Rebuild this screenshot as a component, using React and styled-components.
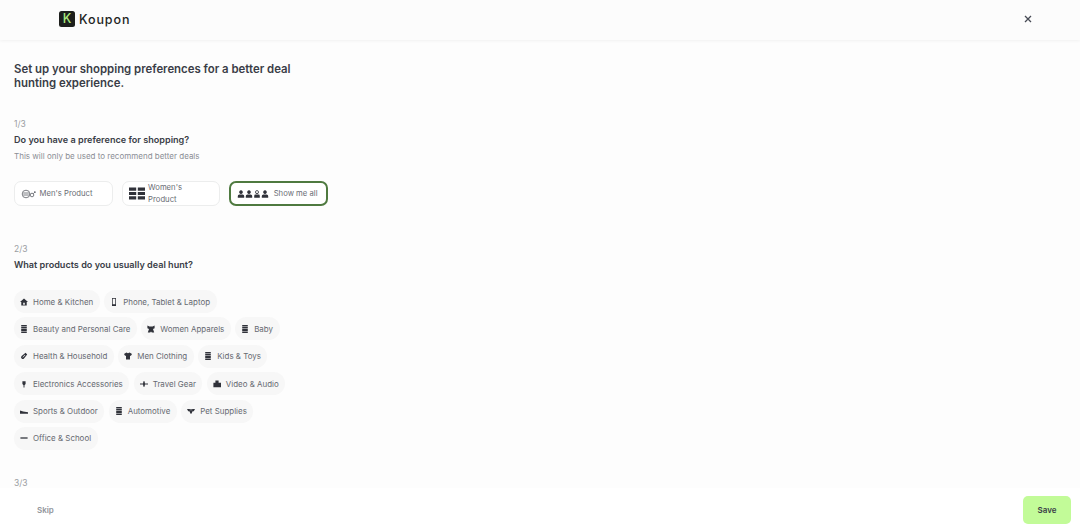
import React from "react";
import styled, { createGlobalStyle } from "styled-components";

const GlobalStyle = createGlobalStyle`
  html, body {
    margin: 0;
    padding: 0;
    height: 100%;
    background: #fff;
    font-family: Inter, "Noto Sans", sans-serif;
  }
  * { box-sizing: border-box; }
`;

const Page = styled.div`
  width: 1080px;
  height: 529px;
  display: flex;
  flex-direction: column;
  overflow: hidden;
  background: #fff;
`;

const Header = styled.header`
  flex: 0 0 40px;
  display: flex;
  align-items: center;
  justify-content: space-between;
  padding: 0 47px 2px 59px;
  background: #fcfcfc;
  box-shadow: 0 1px 3px rgba(0, 0, 0, 0.05);
  position: relative;
  z-index: 1;
`;

const Logo = styled.div`
  display: flex;
  align-items: center;
  gap: 4px;
`;

const LogoMark = styled.span`
  width: 16px;
  height: 16px;
  border-radius: 2.5px;
  background: #1d1f1c;
  color: #a9ea7c;
  font-size: 12.5px;
  font-weight: 500;
  line-height: 16px;
  text-align: center;
`;

const LogoText = styled.span`
  font-size: 12.5px;
  font-weight: 500;
  letter-spacing: 0.9px;
  color: #23251f;
`;

const CloseButton = styled.button`
  width: 10px;
  height: 10px;
  padding: 0;
  border: 0;
  background: none;
  display: flex;
  color: #474b55;
`;

const Main = styled.main`
  flex: 1;
  min-height: 0;
  overflow: hidden;
  padding: 23px 14px 0;
  background: #fdfdfd;
`;

const Title = styled.h1`
  width: 300px;
  margin: 0 0 29px;
  font-size: 11.4px;
  line-height: 13.5px;
  font-weight: 600;
  color: #3a3d47;
`;

const Section = styled.section`
  margin-bottom: ${(p) => p.$gap}px;
`;

const Step = styled.div`
  font-size: 8.5px;
  line-height: 10px;
  color: #9b9da3;
  margin-bottom: 5px;
`;

const Question = styled.h2`
  margin: 0;
  font-size: 9.1px;
  line-height: 12px;
  font-weight: 600;
  color: #3a3d47;
`;

const Hint = styled.p`
  margin: 5px 0 0;
  font-size: 8px;
  line-height: 10px;
  color: #8b8e95;
`;

const Options = styled.div`
  display: flex;
  gap: 8.8px;
  margin-top: 20px;
`;

const Option = styled.button`
  width: 98.8px;
  height: 25px;
  display: flex;
  align-items: center;
  gap: 3.5px;
  padding: 1px 6px 0;
  background: #fff;
  border-radius: 7px;
  border: ${(p) => (p.$selected ? "2px solid #4f7a40" : "1px solid #eceded")};
  font-family: inherit;
  font-size: 7.7px;
  line-height: 12px;
  color: #6a6d75;
  text-align: left;
`;

const IconGroup = styled.span`
  display: inline-flex;
  align-items: center;
  margin-right: 1px;
`;

const NoWrap = styled.span`
  white-space: nowrap;
`;

const Wrapped = styled.span`
  width: 40px;
`;

const Chips = styled.div`
  width: 290px;
  display: flex;
  flex-wrap: wrap;
  gap: 4.4px;
  margin-top: 19px;
`;

const Chip = styled.span`
  height: 23px;
  display: inline-flex;
  align-items: center;
  gap: 5px;
  padding: 0 6.5px 0 6px;
  border-radius: 12px;
  background: #f7f7f7;
  font-size: 7.95px;
  color: #666971;
  white-space: nowrap;
`;

const IconBox = styled.svg`
  flex: none;
  width: ${(p) => p.$size || 8}px;
  height: ${(p) => p.$size || 8}px;
  fill: #30323a;
`;

const Footer = styled.footer`
  flex: 0 0 41px;
  display: flex;
  align-items: center;
  justify-content: space-between;
  padding: 3px 9px 0 37px;
  background: #fff;
`;

const SkipButton = styled.button`
  padding: 0;
  border: 0;
  background: none;
  font-family: inherit;
  font-size: 8px;
  font-weight: 600;
  color: #93969c;
`;

const SaveButton = styled.button`
  width: 48px;
  height: 28px;
  border: 0;
  border-radius: 5px;
  background: #c2fb98;
  font-family: inherit;
  font-size: 8px;
  font-weight: 600;
  color: #3a3d47;
`;

const iconPaths = {
  home: "M5 0.5 L0 5 H1.6 V9.5 H8.4 V5 H10 Z M4 6 H6 V8.5 H4 Z",
  phone: "M2.5 0 H7.5 V10 H2.5 Z M3.4 1 V7.8 H6.6 V1 Z",
  stack: "M1.5 -1 H8.5 V1.4 H1.5 Z M1.5 2 H8.5 V4.4 H1.5 Z M1.5 5 H8.5 V7.4 H1.5 Z M1.5 8 H8.5 V11 H1.5 Z",
  bra: "M0.5 0.5 L3 2 H7 L9.5 0.5 V4 L7.5 5 L9 9.5 H6 L5 8 L4 9.5 H1 L2.5 5 L0.5 4 Z",
  bottle: "M7 1 L9 3 L5 8 Q3.5 9.5 2 8 Q0.5 6.5 2 5 Z M6 3.5 L3 6.5 L3.6 7 L6.6 4 Z",
  shirt: "M3 0.5 L5 1.5 L7 0.5 L10 2.5 L8.5 5 L7.5 4.5 V9.5 H2.5 V4.5 L1.5 5 L0 2.5 Z",
  plug: "M3 1.5 H7 V5 L5.6 6.5 V9.5 H4.4 V6.5 L3 5 Z",
  plane: "M0 4.3 H3.8 L4.3 1.5 H5.7 L6.2 4.3 H10 V5.7 H6.2 L5.7 8.5 H4.3 L3.8 5.7 H0 Z",
  video: "M3 0.5 H7 V3.3 H10 V9 H0.5 V3.3 H3 Z",
  shoe: "M0 4.5 L4 5.5 L10 6.5 V8.5 H0 Z",
  pet: "M0 2.5 H10 L8.5 5.2 H7 L5.5 8.5 H4.5 L3 5.2 H1.5 Z M3.5 3.2 V4.2 H4.5 V3.2 Z M5.5 3.2 V4.2 H6.5 V3.2 Z",
  dash: "M0.5 4.2 H9.5 V5.8 H0.5 Z",
  person: "M5 0.3 A2.3 2.3 0 1 1 4.99 0.3 Z M1 9.7 V7.5 Q1 5.5 3 5.5 H7 Q9 5.5 9 7.5 V9.7 Z",
  hollowPerson: "M5 0.3 A2.3 2.3 0 1 1 4.99 0.3 Z M5 1.3 A1.3 1.3 0 1 0 5.01 1.3 Z M1.5 9.7 V7.5 Q1.5 5.7 3 5.7 H7 Q8.5 5.7 8.5 7.5 V9.7 Z",
  book: "M0 1 H4.5 V3 H0 Z M5.5 1 H10 V3 H5.5 Z M0 3.7 H4.5 V5.7 H0 Z M5.5 3.7 H10 V5.7 H5.5 Z M0 6.4 H4.5 V8.4 H0 Z M5.5 6.4 H10 V8.4 H5.5 Z",
};

const Icon = ({ name, size }) => (
  <IconBox viewBox="0 0 10 10" $size={size}>
    <path d={iconPaths[name]} fillRule="evenodd" />
  </IconBox>
);

const GenderIcon = () => (
  <svg width="15" height="10" viewBox="0 0 15 10" fill="none" stroke="#5a5d64" strokeWidth="0.8" style={{ flex: "none" }}>
    <circle cx="5" cy="5" r="3.8" />
    <path d="M2.2 4 H7.8 M2.2 6 H7.8" />
    <circle cx="11" cy="6" r="1.8" />
    <path d="M12.3 4.7 L14.2 2.8 M13 2.8 H14.2 V4" />
  </svg>
);

const categories = [
  ["Home & Kitchen", "home"],
  ["Phone, Tablet & Laptop", "phone"],
  ["Beauty and Personal Care", "stack"],
  ["Women Apparels", "bra"],
  ["Baby", "stack"],
  ["Health & Household", "bottle"],
  ["Men Clothing", "shirt"],
  ["Kids & Toys", "stack"],
  ["Electronics Accessories", "plug"],
  ["Travel Gear", "plane"],
  ["Video & Audio", "video"],
  ["Sports & Outdoor", "shoe"],
  ["Automotive", "stack"],
  ["Pet Supplies", "pet"],
  ["Office & School", "dash"],
];

const App = () => (
  <Page>
    <GlobalStyle />
    <Header>
      <Logo>
        <LogoMark>K</LogoMark>
        <LogoText>Koupon</LogoText>
      </Logo>
      <CloseButton aria-label="Close">
        <svg width="10" height="10" viewBox="0 0 10 10" fill="none" stroke="currentColor" strokeWidth="1.3">
          <path d="M2 2 L8 8 M8 2 L2 8" />
        </svg>
      </CloseButton>
    </Header>
    <Main>
      <Title>Set up your shopping preferences for a better deal hunting experience.</Title>
      <Section $gap={38}>
        <Step>1/3</Step>
        <Question>Do you have a preference for shopping?</Question>
        <Hint>This will only be used to recommend better deals</Hint>
        <Options>
          <Option>
            <GenderIcon />
            <NoWrap>Men's Product</NoWrap>
          </Option>
          <Option>
            <Icon name="book" size={16} />
            <Wrapped>Women's Product</Wrapped>
          </Option>
          <Option $selected>
            <IconGroup>
              <Icon name="person" size={8} />
              <Icon name="person" size={8} />
              <Icon name="hollowPerson" size={8} />
              <Icon name="person" size={8} />
            </IconGroup>
            <NoWrap>Show me all</NoWrap>
          </Option>
        </Options>
      </Section>
      <Section $gap={28.5}>
        <Step>2/3</Step>
        <Question>What products do you usually deal hunt?</Question>
        <Chips>
          {categories.map(([label, icon]) => (
            <Chip key={label}>
              <Icon name={icon} />
              {label}
            </Chip>
          ))}
        </Chips>
      </Section>
      <Step>3/3</Step>
    </Main>
    <Footer>
      <SkipButton>Skip</SkipButton>
      <SaveButton>Save</SaveButton>
    </Footer>
  </Page>
);

export default App;
